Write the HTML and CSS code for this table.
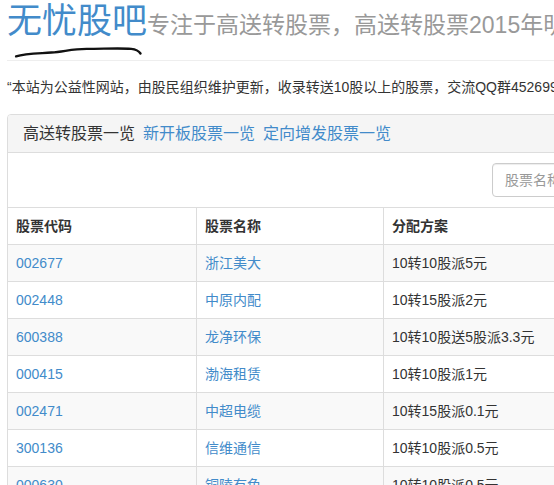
FILE: index.html
```html
<!DOCTYPE html>
<html lang="zh-CN">
<head>
<meta charset="utf-8">
<title>无忧股吧</title>
<link rel="stylesheet" href="styles.css">
</head>
<body>
<div class="container">
  <header class="page-header">
    <h1 class="site-title"><span class="brand">无忧股吧</span><small class="tagline">专注于高送转股票，高送转股票2015年明细一览</small></h1>
    <svg class="swoosh" width="150" height="14" viewBox="0 0 150 14" aria-hidden="true">
      <path d="M4,10 C14,7 28,7 42,6 C56,5 64,2 80,2 C98,2 116,1 128,2 C133,2.5 136,4 138,7" fill="none" stroke="#111" stroke-width="2.6" stroke-linecap="round"/>
    </svg>
  </header>
  <p class="notice">“本站为公益性网站，由股民组织维护更新，收录转送10股以上的股票，交流QQ群4526998”</p>
  <section class="panel">
    <div class="panel-heading">
      <h3 class="panel-title"><span class="current">高送转股票一览</span><a href="#">新开板股票一览</a><a href="#">定向增发股票一览</a></h3>
    </div>
    <div class="panel-body">
      <input class="search" type="text" placeholder="股票名称或代码">
    </div>
    <table class="stock-table">
      <thead>
        <tr><th class="c1">股票代码</th><th class="c2">股票名称</th><th class="c3">分配方案</th><th class="c4">股权登记日</th></tr>
      </thead>
      <tbody>
        <tr><td><a href="#">002677</a></td><td><a href="#">浙江美大</a></td><td>10转10股派5元</td><td></td></tr>
        <tr><td><a href="#">002448</a></td><td><a href="#">中原内配</a></td><td>10转15股派2元</td><td></td></tr>
        <tr><td><a href="#">600388</a></td><td><a href="#">龙净环保</a></td><td>10转10股送5股派3.3元</td><td></td></tr>
        <tr><td><a href="#">000415</a></td><td><a href="#">渤海租赁</a></td><td>10转10股派1元</td><td></td></tr>
        <tr><td><a href="#">002471</a></td><td><a href="#">中超电缆</a></td><td>10转15股派0.1元</td><td></td></tr>
        <tr><td><a href="#">300136</a></td><td><a href="#">信维通信</a></td><td>10转10股派0.5元</td><td></td></tr>
        <tr><td><a href="#">000630</a></td><td><a href="#">铜陵有色</a></td><td>10转10股派0.5元</td><td></td></tr>
      </tbody>
    </table>
  </section>
</div>
</body>
</html>
```

FILE: styles.css
```css
html, body {
  margin: 0;
  padding: 0;
  overflow: hidden;
  background: #fff;
}
body {
  font-family: "Liberation Sans", "Noto Sans CJK SC", sans-serif;
  font-size: 14px;
  line-height: 20px;
  color: #333;
}
a {
  color: #428bca;
  text-decoration: none;
}
.container {
  width: 900px;
  padding: 0 0 0 7px;
}
.page-header {
  height: 61px;
  box-sizing: border-box;
  border-bottom: 1px solid #eee;
  display: flex;
  flex-direction: column;
}
.site-title {
  margin: 0;
  padding-top: 0;
  font-weight: normal;
  font-size: 35px;
  line-height: 42px;
  white-space: nowrap;
}
.brand {
  color: #428bca;
}
.tagline {
  font-size: 23px;
  color: #999;
}
.swoosh {
  display: block;
  margin-top: 1px;
}
.notice {
  margin: 16px 0 17px;
  white-space: nowrap;
}
.panel {
  width: 697px;
  box-sizing: border-box;
  border: 1px solid #ddd;
  border-radius: 4px;
  overflow: hidden;
}
.panel-heading {
  background: #f5f5f5;
  border-bottom: 1px solid #ddd;
  padding: 10px 15px;
}
.panel-title {
  margin: 0;
  font-size: 16px;
  line-height: 17px;
  font-weight: normal;
  display: flex;
  gap: 8px;
}
.panel-body {
  padding: 10px;
  display: flex;
  justify-content: flex-end;
}
.search {
  width: 201px;
  height: 34px;
  box-sizing: border-box;
  padding: 6px 12px;
  border: 1px solid #ccc;
  border-radius: 4px;
  box-shadow: inset 0 1px 1px rgba(0,0,0,.075);
  font: inherit;
  color: #555;
}
.search::placeholder {
  color: #999;
}
.stock-table {
  width: 695px;
  table-layout: fixed;
  border-collapse: separate;
  border-spacing: 0;
  border-top: 1px solid #ddd;
}
.stock-table th,
.stock-table td {
  box-sizing: border-box;
  padding: 8px;
  text-align: left;
  border-right: 1px solid #ddd;
  border-bottom: 1px solid #ddd;
  white-space: nowrap;
}
.stock-table th {
  font-weight: bold;
}
.stock-table .c1 { width: 189px; }
.stock-table .c2 { width: 187px; }
.stock-table .c3 { width: 188px; }
.stock-table tbody tr:nth-child(odd) td {
  background: #f9f9f9;
}
```
